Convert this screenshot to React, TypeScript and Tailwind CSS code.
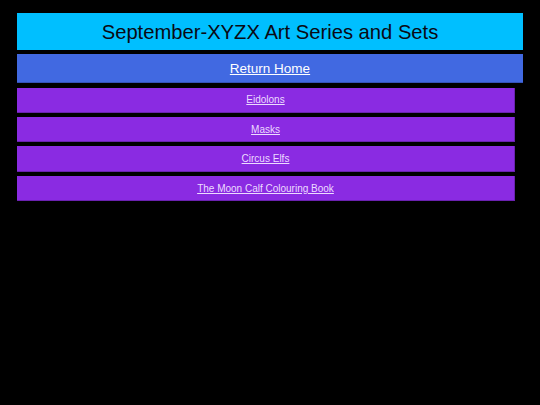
const links = ["Eidolons", "Masks", "Circus Elfs", "The Moon Calf Colouring Book"];

export default function App() {
  return (
    <div className="min-h-[405px] bg-black px-[17px] pt-[13px] font-['Liberation_Sans',Arial,sans-serif]">
      <header className="flex h-[37px] w-[506px] items-center justify-center bg-[#00bfff] pt-[2px]">
        <h1 className="text-[20.2px] leading-none text-[#0a0a14]">September-XYZX Art Series and Sets</h1>
      </header>
      <nav className="mt-[4px] flex h-[29px] w-[506px] items-center justify-center border-b border-[#3553b8] bg-[#4169e1] pt-[2px]">
        <a href="#" className="text-[13.5px] leading-none text-white underline">
          Return Home
        </a>
      </nav>
      <ul className="mt-[4.5px] flex w-[498px] flex-col gap-[4px]">
        {links.map((l) => (
          <li
            key={l}
            className="flex h-[25.4px] items-center justify-center border-r border-b border-[#6a22b0] bg-[#8a2be2] pt-[1.5px]"
          >
            <a href="#" className="text-[10px] leading-none text-[#ecdcff] underline">
              {l}
            </a>
          </li>
        ))}
      </ul>
    </div>
  );
}
